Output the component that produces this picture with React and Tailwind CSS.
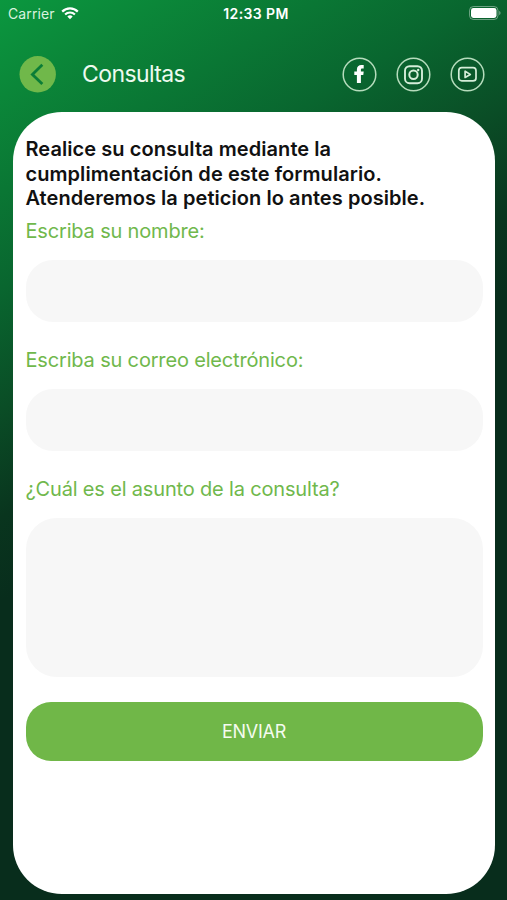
import { useState } from 'react';

function WifiIcon() {
  return (
    <svg className="w-[18px] h-[13px]" viewBox="0 0 18 13" fill="none" stroke="#fff">
      <path d="M1.2 4.6a11 11 0 0 1 15.6 0" strokeWidth="2.2" />
      <path d="M4.1 7.6a6.9 6.9 0 0 1 9.8 0" strokeWidth="2.1" />
      <path d="M9 12.3 6.3 9.6a3.8 3.8 0 0 1 5.4 0z" fill="#fff" stroke="none" />
    </svg>
  );
}

function BatteryIcon() {
  return (
    <svg className="w-[32px] h-[14px]" viewBox="0 0 32 14" fill="none">
      <rect x=".5" y=".5" width="28.5" height="13" rx="4" stroke="#fff" strokeOpacity=".4" />
      <rect x="2" y="2" width="25.5" height="10" rx="2.4" fill="#fff" />
      <path d="M30.3 4.8c1.6.7 1.6 3.7 0 4.4z" fill="#fff" fillOpacity=".5" />
    </svg>
  );
}

function SocialButton({ label, children }) {
  return (
    <button type="button" aria-label={label} className="block">
      <svg className="w-[35px] h-[35px]" viewBox="0 0 35 35" fill="none" stroke="#d5eed9">
        <circle cx="17.5" cy="17.5" r="16.3" strokeWidth="1.5" stroke="#b5dcbc" />
        {children}
      </svg>
    </button>
  );
}

function Field({ label, value, onChange }) {
  return (
    <label className="block">
      <span className="block h-[30px] leading-[30px] text-[20px] tracking-[-0.17px] text-[#70b84c] whitespace-nowrap">{label}</span>
      <input
        type="text"
        className="block w-full h-[62px] mt-[14px] mb-[23px] px-5 rounded-[27px] bg-[#f7f7f7] text-black outline-none"
        value={value}
        onChange={e => onChange(e.target.value)}
      />
    </label>
  );
}

function App() {
  const [nombre, setNombre] = useState('');
  const [correo, setCorreo] = useState('');
  const [asunto, setAsunto] = useState('');

  const handleSubmit = (e) => {
    e.preventDefault();
    setNombre('');
    setCorreo('');
    setAsunto('');
  };

  return (
    <div className="h-screen flex flex-col overflow-hidden font-['Inter',sans-serif] bg-[linear-gradient(149deg,#0b973f_0%,#0b8739_8%,#09662f_24%,#0a4d26_34%,#09351e_43%,#082d1c_50%,#082d1c_100%)]">
      {/* Barra de estado */}
      <div className="h-[26px] shrink-0 grid grid-cols-3 items-center pl-[8px] pr-[6px] text-[14px] text-white">
        <div className="flex items-center gap-[6px]">
          <span className="tracking-[0.1px] text-[#d9f2df]">Carrier</span>
          <WifiIcon />
        </div>
        <span className="pl-[3px] text-center font-semibold tracking-[0.4px] whitespace-nowrap">12:33 PM</span>
        <div className="flex justify-end"><BatteryIcon /></div>
      </div>

      <header className="h-[86px] shrink-0 flex items-center pl-[19px] pr-[22px]">
        <button type="button" aria-label="Volver" className="mt-[11px]">
          <svg className="w-[37px] h-[37px]" viewBox="0 0 37 37" fill="none">
            <circle cx="18.7" cy="18.3" r="18.2" fill="#70b84a" />
            <path d="M23.3 8.7 13.4 18.4l9.9 9.7" stroke="#0b7d37" strokeWidth="2.8" />
          </svg>
        </button>
        <h1 className="ml-[26px] mt-[10px] text-[23px] tracking-[-0.6px] text-[#edfaef]">Consultas</h1>
        <div className="ml-auto mt-[10px] flex gap-[19px]">
          <SocialButton label="Facebook">
            <path stroke="none" fill="#fff" d="M14.9 26v-7.9h-2.6v-3.5h2.6v-2c0-3 1.7-4.6 4.5-4.6h2.3v3.5h-1.4c-1 0-1.4.4-1.4 1.4v1.7h2.8l-.4 3.5h-2.4V26z" />
          </SocialButton>
          <SocialButton label="Instagram">
            <rect x="9" y="9.2" width="17" height="17" rx="4.5" strokeWidth="1.9" />
            <circle cx="17.5" cy="17.7" r="4.2" strokeWidth="2" />
            <circle cx="22.2" cy="13" r="1.2" fill="#d5eed9" stroke="none" />
          </SocialButton>
          <SocialButton label="YouTube">
            <rect x="8.8" y="10.7" width="17.2" height="13.2" rx="3" strokeWidth="1.7" />
            <path d="M15.1 14.2v6.3l5.2-3.1z" strokeWidth="1.7" strokeLinejoin="round" />
          </SocialButton>
        </div>
      </header>

      <form onSubmit={handleSubmit} className="h-[782px] shrink-0 ml-[13px] mr-[12px] px-[12.5px] pt-[25px] rounded-[49px] bg-white">
        <p className="mb-[5px] text-[20px] leading-[24.7px] font-semibold tracking-[0.06px] text-[#111] whitespace-nowrap">
          Realice su consulta mediante la<br />
          cumplimentación de este formulario.<br />
          Atenderemos la peticion lo antes posible.
        </p>

        <Field label="Escriba su nombre:" value={nombre} onChange={setNombre} />
        <Field label="Escriba su correo electrónico:" value={correo} onChange={setCorreo} />

        <label className="block">
          <span className="block h-[30px] leading-[30px] text-[20px] tracking-[-0.17px] text-[#70b84c] whitespace-nowrap">¿Cuál es el asunto de la consulta?</span>
          <textarea
            className="block w-full h-[159px] mt-[14px] p-5 rounded-[31px] bg-[#f7f7f7] text-black outline-none resize-none"
            value={asunto}
            onChange={e => setAsunto(e.target.value)}
          />
        </label>

        <button type="submit" className="block w-full h-[59px] mt-[25px] rounded-[25px] bg-[#70b748] text-[18px] tracking-[-0.3px] text-[#f4fbef]">
          ENVIAR
        </button>
      </form>
    </div>
  );
}

export default App;
